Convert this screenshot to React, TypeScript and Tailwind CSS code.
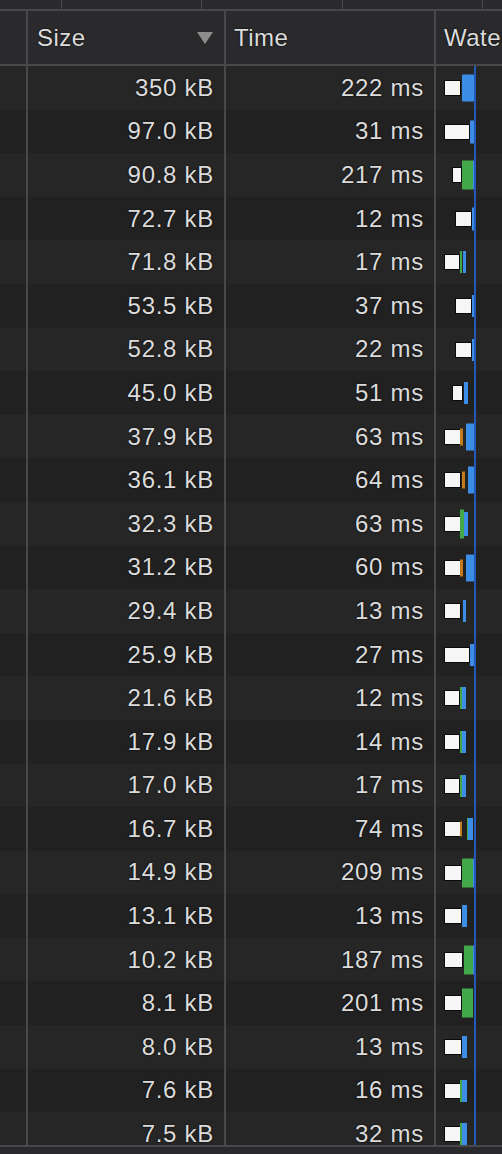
import React from 'react';

type Seg = [number, number, string, number];

interface Row {
  size: string;
  time: string;
  white: [number, number];
  segs: Seg[];
}

const BLUE = '#3b8de6';
const GREEN = '#42a84a';
const ORANGE = '#c27a1f';

const rows: Row[] = [
  { size: '350 kB', time: '222 ms', white: [9, 15], segs: [[26, 12, BLUE, 27]] },
  { size: '97.0 kB', time: '31 ms', white: [9, 24], segs: [[34, 4, BLUE, 23]] },
  { size: '90.8 kB', time: '217 ms', white: [17, 8], segs: [[26, 11, GREEN, 29], [37, 3, BLUE, 29]] },
  { size: '72.7 kB', time: '12 ms', white: [20, 15], segs: [[36, 3, BLUE, 23]] },
  { size: '71.8 kB', time: '17 ms', white: [9, 14], segs: [[24, 2, GREEN, 22], [27, 3, BLUE, 22]] },
  { size: '53.5 kB', time: '37 ms', white: [20, 15], segs: [[36, 3, BLUE, 22]] },
  { size: '52.8 kB', time: '22 ms', white: [20, 15], segs: [[36, 3, BLUE, 22]] },
  { size: '45.0 kB', time: '51 ms', white: [17, 9], segs: [[28, 4, BLUE, 22]] },
  { size: '37.9 kB', time: '63 ms', white: [9, 15], segs: [[24, 3, ORANGE, 17], [30, 8, BLUE, 27]] },
  { size: '36.1 kB', time: '64 ms', white: [9, 15], segs: [[26, 3, ORANGE, 17], [32, 6, BLUE, 27]] },
  { size: '32.3 kB', time: '63 ms', white: [9, 15], segs: [[24, 4, GREEN, 29], [28, 4, BLUE, 24]] },
  { size: '31.2 kB', time: '60 ms', white: [9, 15], segs: [[24, 3, ORANGE, 17], [30, 8, BLUE, 27]] },
  { size: '29.4 kB', time: '13 ms', white: [9, 15], segs: [[27, 3, BLUE, 22]] },
  { size: '25.9 kB', time: '27 ms', white: [9, 24], segs: [[34, 4, BLUE, 22]] },
  { size: '21.6 kB', time: '12 ms', white: [9, 14], segs: [[24, 2, GREEN, 22], [26, 4, BLUE, 22]] },
  { size: '17.9 kB', time: '14 ms', white: [9, 14], segs: [[24, 2, GREEN, 22], [26, 4, BLUE, 22]] },
  { size: '17.0 kB', time: '17 ms', white: [9, 14], segs: [[24, 2, GREEN, 22], [26, 4, BLUE, 22]] },
  { size: '16.7 kB', time: '74 ms', white: [9, 15], segs: [[24, 2, ORANGE, 15], [31, 1, GREEN, 22], [32, 5, BLUE, 22]] },
  { size: '14.9 kB', time: '209 ms', white: [9, 16], segs: [[26, 11, GREEN, 29], [37, 3, BLUE, 29]] },
  { size: '13.1 kB', time: '13 ms', white: [9, 16], segs: [[26, 5, BLUE, 22]] },
  { size: '10.2 kB', time: '187 ms', white: [9, 17], segs: [[28, 9, GREEN, 29], [37, 3, BLUE, 29]] },
  { size: '8.1 kB', time: '201 ms', white: [9, 16], segs: [[26, 11, GREEN, 29]] },
  { size: '8.0 kB', time: '13 ms', white: [9, 16], segs: [[26, 5, BLUE, 22]] },
  { size: '7.6 kB', time: '16 ms', white: [9, 16], segs: [[24, 2, GREEN, 22], [26, 5, BLUE, 22]] },
  { size: '7.5 kB', time: '32 ms', white: [9, 16], segs: [[24, 2, GREEN, 22], [26, 5, BLUE, 22]] },
];

const Waterfall: React.FC<{ row: Row }> = ({ row }) => {
  const cy = 22;
  return (
    <svg width="66" height="44" className="block">
      <rect x={row.white[0] - 1} y={cy - 8} width={row.white[1] + 2} height={16} fill="#0a0a0a" />
      <rect x={row.white[0]} y={cy - 7} width={row.white[1]} height={14} fill="#f6f6f6" />
      {row.segs.map(([x, w, c, h], i) => (
        <rect key={i} x={x} y={cy - h / 2} width={w} height={h} fill={c} />
      ))}
      <rect x={38} y={0} width={2} height={44} fill="#2359b9" />
    </svg>
  );
};

export default function App() {
  return (
    <div className="w-[502px] h-[1154px] overflow-hidden bg-[#242424] font-['Liberation_Sans',Arial,sans-serif] text-[#dcdcdc] flex flex-col">
      {/* top strip */}
      <div className="h-[9px] shrink-0 bg-[#2a2a2c] flex">
        <div className="w-[62px] border-r border-[#4a4a4c]" />
        <div className="w-[140px] border-r border-[#4a4a4c]" />
        <div className="w-[141px] border-r border-[#4a4a4c]" />
        <div className="w-[140px] border-r border-[#4a4a4c]" />
      </div>

      {/* header */}
      <div className="h-[57px] shrink-0 bg-[#2a2a2c] border-y-2 border-[#48484a] flex text-[24px] leading-none tracking-[0.02em] [text-shadow:0_0_2px_#000]">
        <div className="w-[28px] border-r-2 border-[#48484a]" />
        <div className="w-[198px] border-r-2 border-[#48484a] flex items-center justify-between pl-[9px] pr-[11px]">
          <span>Size</span>
          <svg width="16" height="12" viewBox="0 0 16 12">
            <polygon points="0,0 16,0 8,12" fill="#8d8d8d" />
          </svg>
        </div>
        <div className="w-[210px] border-r-2 border-[#48484a] flex items-center pl-[8px]">Time</div>
        <div className="flex-1 flex items-center pl-[8px] whitespace-nowrap overflow-hidden">Waterfall</div>
      </div>

      {/* body */}
      <div className="h-[1079px] shrink-0 overflow-hidden">
        {rows.map((r, i) => (
          <div
            key={i}
            className={`h-[43.6px] flex text-[24px] leading-none tracking-[0.03em] [text-shadow:0_0_2px_#000] ${i % 2 === 0 ? 'bg-[#262627]' : 'bg-[#212122]'}`}
          >
            <div className="w-[28px] border-r-2 border-[#48484a]" />
            <div className="w-[198px] border-r-2 border-[#48484a] flex items-center justify-end pr-[10px]">{r.size}</div>
            <div className="w-[210px] border-r-2 border-[#48484a] flex items-center justify-end pr-[10px]">{r.time}</div>
            <div className="flex-1 overflow-hidden">
              <Waterfall row={r} />
            </div>
          </div>
        ))}
      </div>

      {/* footer */}
      <div className="flex-1 border-t-2 border-[#48484a] bg-[#2a2a2c]" />
    </div>
  );
}
